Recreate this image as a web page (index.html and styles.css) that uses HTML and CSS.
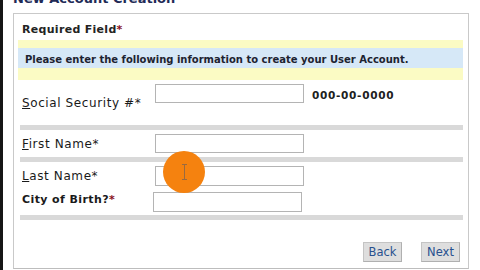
FILE: index.html
```html
<!DOCTYPE html>
<html>
<head>
    <meta name="viewport" content="width=device-width, initial-scale=1.0">
    <title>New Account Creation</title>
    <link rel="stylesheet" href="styles.css">
</head>
<body>
    <h1>New Account Creation</h1>

    <div class="panel">
        <div class="required">Required Field<span class="star">*</span></div>

        <div class="notice">
            <div class="notice-text">Please enter the following information to create your User Account.</div>
        </div>

        <div class="row row-ssn">
            <label><u>S</u>ocial Security #*</label>
            <input type="text">
            <span class="hint">000-00-0000</span>
        </div>
        <div class="bar"></div>

        <div class="row row-first">
            <label><u>F</u>irst Name*</label>
            <input type="text">
        </div>
        <div class="bar"></div>

        <div class="row row-last">
            <label><u>L</u>ast Name*</label>
            <input type="text">
        </div>
        <div class="row row-city">
            <label class="bold">City of Birth?<span class="star">*</span></label>
            <input type="text">
        </div>
        <div class="bar"></div>

        <div class="buttons">
            <button>Back</button>
            <button>Next</button>
        </div>
    </div>

    <div class="cursor-spot"><span class="ibeam"></span></div>
</body>
</html>
```

FILE: styles.css
```css
html,
body {
    background: #fff;
    font-family: "DejaVu Sans", Verdana, sans-serif;
    color: #222;
}

body {
    margin: 0;
    border-left: 3px solid #151515;
    height: 270px;
    overflow: hidden;
    position: relative;
}

h1 {
    font-size: 13px;
    line-height: 16px;
    font-weight: bold;
    color: #1f2b57;
    margin: -9px 0 6px 10px;
}

.panel {
    margin-left: 10px;
    width: 445px;
    height: 254px;
    border: 1px solid #c9c9c9;
    border-bottom-color: #bdbdbd;
    padding: 0 5px 0 4px;
}

.required {
    font-size: 11px;
    font-weight: bold;
    line-height: 13px;
    letter-spacing: 0.3px;
    padding: 9px 0 4px 4px;
    color: #232323;
}

.star {
    color: #8a1020;
}

.notice {
    background: #fbfbc4;
    padding: 8px 0 12px;
}

.notice-text {
    background: #d6e8f7;
    font-size: 10px;
    font-weight: bold;
    line-height: 12px;
    padding: 6px 0 2px 7px;
    color: #1d2330;
}

.row {
    display: flex;
    align-items: flex-start;
    padding-left: 4px;
}

.row label {
    width: 133px;
    font-size: 12px;
    line-height: 13px;
    letter-spacing: 0.6px;
    color: #1a1a1a;
}

.row label.bold {
    font-weight: bold;
    font-size: 11px;
    letter-spacing: 0.4px;
    width: 131px;
}

.row input {
    width: 147px;
    height: 17px;
    margin: 4px 0 0;
    padding: 0;
    border: 1px solid #b4b4b4;
    background: #fff;
}

.row-ssn {
    height: 45px;
}

.row-ssn label {
    margin-top: 17px;
}

.hint {
    font-size: 10.5px;
    font-weight: bold;
    line-height: 13px;
    margin: 9px 0 0 8px;
    color: #202020;
    letter-spacing: 0.7px;
}

.row-first {
    height: 27px;
}

.row-first label {
    margin-top: 8px;
}

.row-last {
    height: 26px;
}

.row-last label {
    margin-top: 8px;
}

.row-last input {
    height: 18px;
}

.row-city {
    height: 27px;
}

.row-city label {
    margin-top: 5px;
}

.row-city input {
    height: 18px;
}

.bar {
    height: 5px;
    background: #d9d9d9;
    margin-left: 2px;
}

.buttons {
    display: flex;
    justify-content: flex-end;
    gap: 19px;
    padding: 22px 3px 0 0;
}

.buttons button {
    font-family: "DejaVu Sans", Tahoma, sans-serif;
    font-size: 11.5px;
    color: #27508e;
    background: #dedede;
    border: 1px solid #c4c4c4;
    border-bottom-color: #b0b0b0;
    border-right-color: #b0b0b0;
    height: 20px;
    padding: 0 4px;
    min-width: 39px;
}

.cursor-spot {
    position: absolute;
    left: 160px;
    top: 151px;
    width: 42px;
    height: 42px;
    border-radius: 50%;
    background: #f5820f;
    display: flex;
    align-items: center;
    justify-content: center;
}

.ibeam {
    width: 1px;
    height: 16px;
    background: #9a6a40;
    position: relative;
}

.ibeam::before,
.ibeam::after {
    content: "";
    position: absolute;
    left: -2px;
    width: 5px;
    height: 1px;
    background: #9a6a40;
}

.ibeam::before {
    top: 0;
}

.ibeam::after {
    bottom: 0;
}
```
